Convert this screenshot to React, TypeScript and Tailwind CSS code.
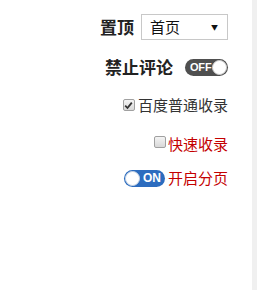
import React from "react";

const font = { fontFamily: '"Microsoft YaHei", "Noto Sans CJK SC", "Noto Sans", sans-serif' };
const latin = { fontFamily: '"Liberation Sans", Arial, sans-serif' };

function Toggle({ on }: { on: boolean }) {
  if (on) {
    return (
      <div className="flex h-[17px] w-[41px] items-center rounded-full bg-[#2c6cbf] pl-[1px] pr-[4px]">
        <span className="h-[15px] w-[15px] rounded-full border border-[#c9d6e6] bg-white" />
        <span className="ml-[3px] text-[12px] font-bold leading-none text-white" style={latin}>
          ON
        </span>
      </div>
    );
  }
  return (
    <div className="flex h-[17px] w-[43px] items-center justify-between rounded-full bg-[#4f4f4f] pl-[5px] pr-[1px]">
      <span className="text-[11px] font-bold leading-none tracking-[-0.2px] text-white" style={latin}>
        OFF
      </span>
      <span className="h-[15px] w-[15px] rounded-full border border-[#cfcfcf] bg-white" />
    </div>
  );
}

function Check({ checked }: { checked: boolean }) {
  return (
    <span className="flex h-[12px] w-[12px] items-center justify-center rounded-[2px] border border-[#a0a0a0] bg-gradient-to-b from-[#f4f4f4] to-[#d8d8d8]">
      {checked ? (
        <svg width="9" height="9" viewBox="0 0 9 9">
          <path d="M1.2 4.6 L3.5 7 L7.8 1.6" fill="none" stroke="#333" strokeWidth="1.8" />
        </svg>
      ) : null}
    </span>
  );
}

export default function App() {
  return (
    <div className="flex h-[290px] w-[257px] bg-white" style={font}>
      <div className="flex w-[252px] flex-col items-end pr-[24px]">
        <div className="mt-[14px] flex h-[26px] items-center">
          <span className="mr-[7px] text-[17px] font-bold text-[#222]">置顶</span>
          <div className="flex h-[26px] w-[87px] items-center justify-between border border-[#c8c8c8] bg-white pl-[8px] pr-[9px]">
            <span className="text-[15px] text-[#111]">首页</span>
            <span className="text-[7px] text-[#111]">▼</span>
          </div>
        </div>

        <div className="mt-[16px] flex h-[22px] items-center">
          <span className="mr-[12px] text-[17px] font-bold text-[#222]">禁止评论</span>
          <Toggle on={false} />
        </div>

        <div className="mt-[17px] flex h-[20px] items-center">
          <span className="mr-[3px]">
            <Check checked={true} />
          </span>
          <span className="text-[15px] text-[#333]">百度普通收录</span>
        </div>

        <div className="mt-[19px] flex h-[20px] items-center">
          <span className="mr-[2px] -mt-[4px]">
            <Check checked={false} />
          </span>
          <span className="text-[15px] text-[#c40000]">快速收录</span>
        </div>

        <div className="mt-[14px] flex h-[20px] items-center">
          <div className="mr-[3px]">
            <Toggle on={true} />
          </div>
          <span className="text-[15px] text-[#c40000]">开启分页</span>
        </div>
      </div>
      <div className="h-full w-[5px] bg-[#f0f0f0]" />
    </div>
  );
}
